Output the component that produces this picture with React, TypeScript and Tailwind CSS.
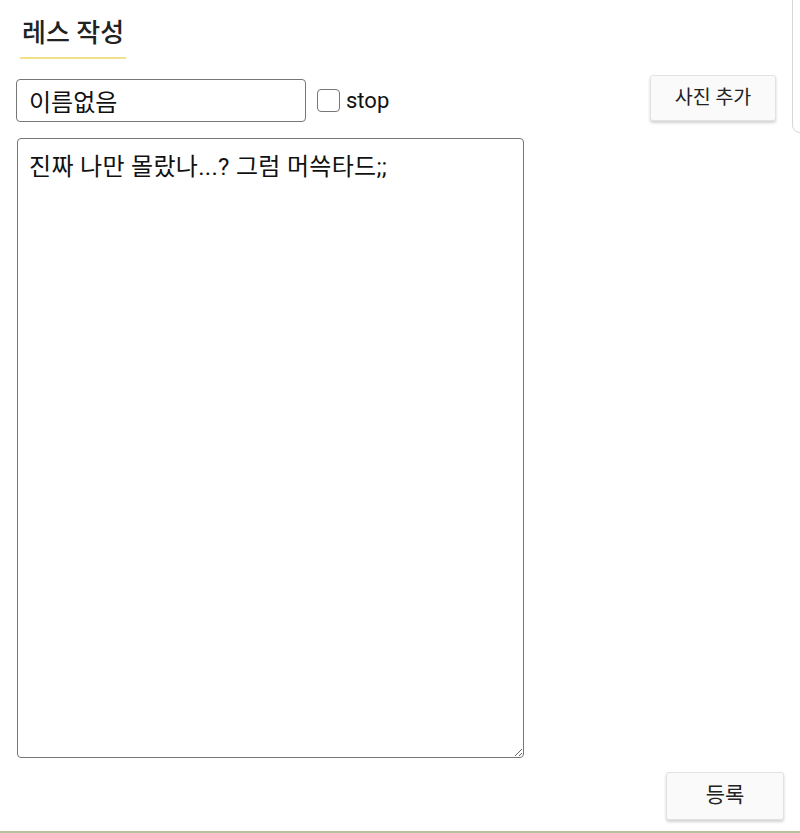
import React from 'react'

const font = { fontFamily: 'Roboto, "Noto Sans CJK KR", sans-serif' }

export default function App() {
  return (
    <div
      className="relative h-[833px] w-[800px] overflow-hidden border-b-2 border-[#b8c29c] bg-white text-[#111]"
      style={font}
    >
      {/* neighbouring panel peeking in from the right */}
      <div className="absolute right-[-40px] top-[-20px] h-[153px] w-[48px] rounded-[8px] border border-[#d6d6d6] bg-white" />

      <div className="px-[20px] pt-[15px]">
        <h2 className="inline-block border-b-2 border-[#f1e08c] px-[2px] pb-[6px] text-[26px] font-medium leading-[36px] text-[#222]">
          레스 작성
        </h2>
      </div>

      <div className="mt-[16px] flex items-start pl-[16px] pr-[24px]">
        <div className="mt-[4px] flex items-center">
          <input
            defaultValue="이름없음"
            className="h-[43px] w-[290px] rounded-[4px] border border-[#767676] px-[12px] text-[24px] outline-none"
            style={font}
          />
          <label className="ml-[11px] flex items-center gap-[6px] text-[22px]">
            <span className="h-[23px] w-[23px] rounded-[4px] border-[1.5px] border-[#767676] bg-white" />
            stop
          </label>
        </div>
        <button className="ml-auto h-[46px] w-[126px] rounded-[3px] border border-[#e2e2e2] bg-[#fafafa] text-[19.5px] text-[#222] shadow-[0_2px_3px_rgba(0,0,0,0.18)]">
          사진 추가
        </button>
      </div>

      <div className="mt-[16px] pl-[17px]">
        <textarea
          defaultValue="진짜 나만 몰랐나...? 그럼 머쓱타드;;"
          className="block h-[620px] w-[507px] resize rounded-[4px] border border-[#767676] px-[11px] pb-[8px] pt-[11px] text-[24px] leading-[34px] tracking-[0.3px] outline-none"
          style={font}
        />
      </div>

      <div className="mt-[14px] flex justify-end pr-[16px]">
        <button className="h-[48px] w-[118px] rounded-[3px] border border-[#e2e2e2] bg-[#fafafa] text-[21px] text-[#222] shadow-[0_2px_3px_rgba(0,0,0,0.18)]">
          등록
        </button>
      </div>
    </div>
  )
}
